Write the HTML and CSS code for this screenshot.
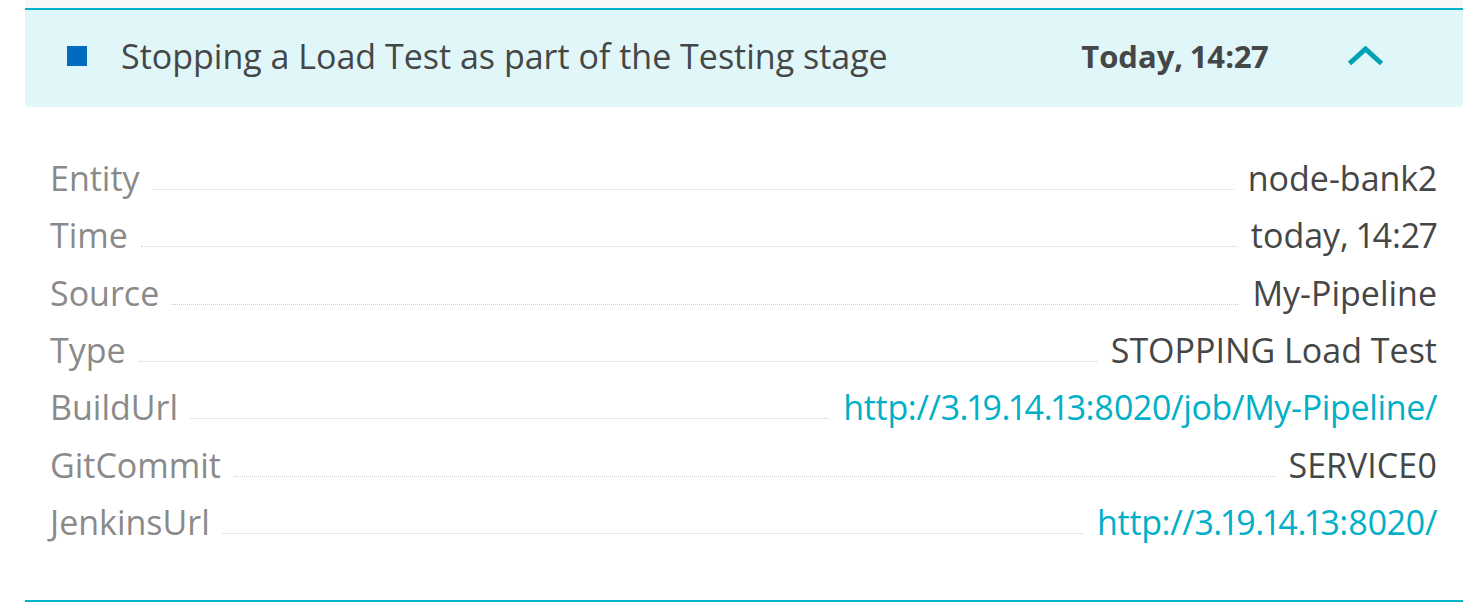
FILE: index.html
```html
<!DOCTYPE html>
<html lang="en">
<head>
<meta charset="utf-8">
<title>Event</title>
<link rel="stylesheet" href="styles.css">
</head>
<body>
<div class="event">
  <div class="event-header">
    <span class="event-marker"></span>
    <span class="event-title">Stopping a Load Test as part of the Testing stage</span>
    <span class="event-time">Today, 14:27</span>
    <span class="event-toggle">
      <svg width="37" height="20" viewBox="0 0 37 20"><polyline points="2.5,17.5 18.5,3 34.5,17.5" fill="none" stroke="#00a1b2" stroke-width="5"/></svg>
    </span>
  </div>
  <div class="event-body">
    <div class="prop"><span class="prop-key">Entity</span><span class="prop-dots"></span><span class="prop-val">node-bank2</span></div>
    <div class="prop"><span class="prop-key">Time</span><span class="prop-dots"></span><span class="prop-val">today, 14:27</span></div>
    <div class="prop"><span class="prop-key">Source</span><span class="prop-dots"></span><span class="prop-val">My-Pipeline</span></div>
    <div class="prop"><span class="prop-key">Type</span><span class="prop-dots"></span><span class="prop-val">STOPPING Load Test</span></div>
    <div class="prop"><span class="prop-key">BuildUrl</span><span class="prop-dots"></span><a class="prop-val prop-link" href="#">http://3.19.14.13:8020/job/My-Pipeline/</a></div>
    <div class="prop"><span class="prop-key">GitCommit</span><span class="prop-dots"></span><span class="prop-val">SERVICE0</span></div>
    <div class="prop"><span class="prop-key">JenkinsUrl</span><span class="prop-dots"></span><a class="prop-val prop-link" href="#">http://3.19.14.13:8020/</a></div>
  </div>
</div>
</body>
</html>
```

FILE: styles.css
```css
html, body {
  margin: 0;
  padding: 0;
  background: #ffffff;
}

body {
  font-family: "Open Sans", "DejaVu Sans", sans-serif;
  font-size: 34px;
  color: #454646;
  font-variant-numeric: proportional-nums;
}

.event {
  margin: 0 9px 0 25px;
  padding-top: 8px;
  background: linear-gradient(#f8f8f8, #f8f8f8) top / 100% 8px no-repeat;
}

.event-header {
  border-top: 2px solid #00b3c9;
  background: #e0f6f9;
  border-radius: 0 0 5px 5px;
  height: 99px;
  box-sizing: border-box;
  display: flex;
  align-items: center;
  padding: 0 79px 5px 42px;
}

.event-marker {
  width: 20px;
  height: 20px;
  background: #006bbf;
  flex: none;
  margin-right: 34px;
}

.event-title {
  flex: 1;
  white-space: nowrap;
  color: #454646;
}

.event-time {
  font-weight: 700;
  font-size: 31px;
  color: #454646;
  margin-right: 79px;
}

.event-toggle {
  display: flex;
  width: 37px;
  height: 20px;
}

.event-body {
  padding: 43px 26px 49px 25px;
  border-bottom: 2px solid #00b3c9;
  box-shadow: 0 2px 0 #f8f8f8;
}

.prop {
  display: flex;
  align-items: baseline;
  line-height: 57.33px;
  white-space: nowrap;
}

.prop-key {
  color: #8a8a8a;
}

.prop-dots {
  flex: 1;
  margin: 0 14px 0 13px;
  border-bottom: 1px dotted #cfcfcf;
  position: relative;
  top: -1px;
}

.prop-val {
  color: #454646;
}

.prop-link {
  color: #00afc8;
  text-decoration: none;
  letter-spacing: -0.35px;
}
```
